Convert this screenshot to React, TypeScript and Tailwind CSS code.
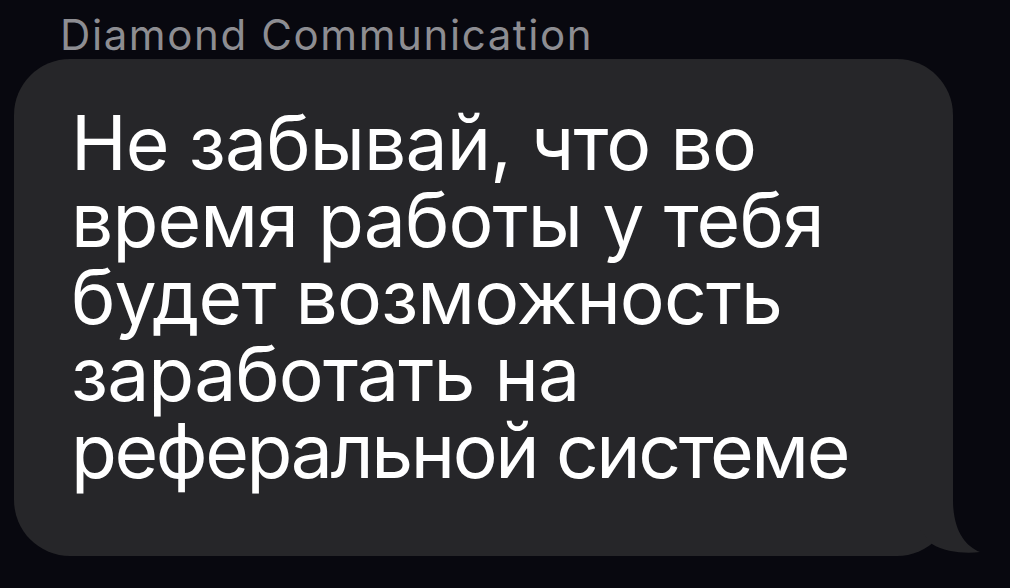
export default function App() {
  return (
    <div
      className="w-[1010px] h-[588px] bg-[#08080f] overflow-hidden"
      style={{ fontFamily: 'Inter, "Noto Sans", sans-serif' }}
    >
      <div className="h-[59px] pt-[14px] pl-[60px]">
        <div className="text-[42px] leading-[42px] tracking-[1.6px] text-[#8d8d92]">Diamond Communication</div>
      </div>
      <div className="relative ml-[14px] w-[939px] h-[497px] rounded-[56px] bg-[#262629]">
        <div className="pl-[57px] pt-[45px] text-[75px] leading-[77px] tracking-[-0.9px] text-white">
          Не забывай, что во
          <br />
          время работы у тебя
          <br />
          будет возможность
          <br />
          заработать на
          <br />
          <span className="tracking-[-2.4px]">реферальной системе</span>
        </div>
        <svg
          className="absolute right-[-32px] bottom-[-4px]"
          width="65"
          height="80"
          viewBox="0 0 65 80"
        >
          <path
            d="M0 0 L33 0 L33 20 C33 50 45 66 60 72 C45 74 25 72 12 64 L0 50 Z"
            fill="#262629"
          />
        </svg>
      </div>
    </div>
  );
}
